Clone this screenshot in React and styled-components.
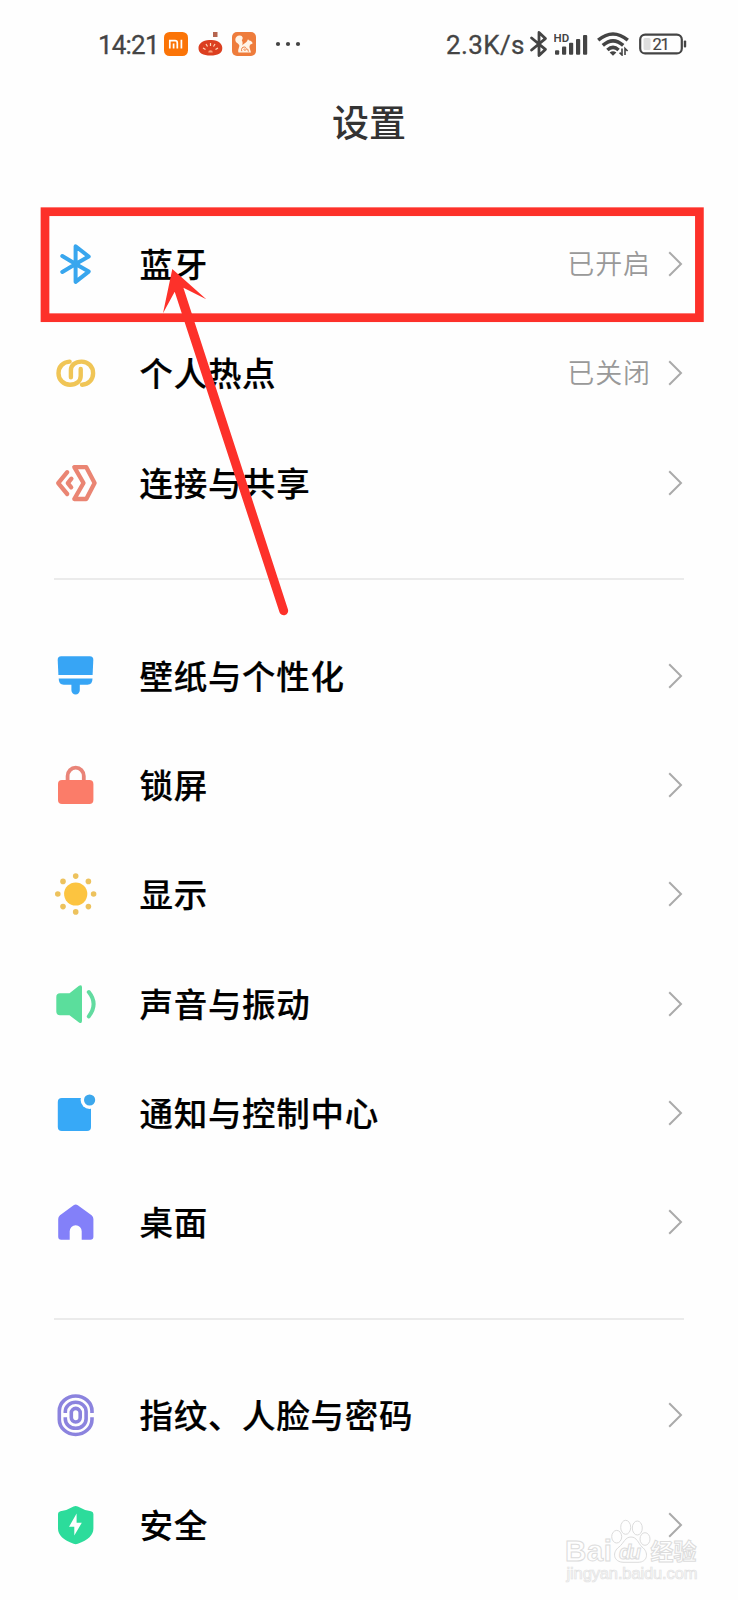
import styled, { createGlobalStyle } from "styled-components";

const GlobalStyle = createGlobalStyle`
  * {
    box-sizing: border-box;
  }
  body {
    margin: 0;
    background: #fefefe;
    font-family: "Noto Sans CJK SC", "Noto Sans", sans-serif;
  }
`;

const Page = styled.div`
  position: relative;
  width: 738px;
  height: 1600px;
  overflow: hidden;
  background: #fefefe;
`;

const StatusBar = styled.div`
  display: flex;
  justify-content: space-between;
  align-items: center;
  height: 88px;
  padding: 0 51px 0 98px;
  color: #444;
`;
const StatusGroup = styled.div`
  display: flex;
  align-items: center;
`;
const StatusText = styled.span`
  width: ${(p) => p.$width}px;
  padding-top: 1px;
  font-family: Roboto, sans-serif;
  font-size: 26px;
  line-height: 30px;
  letter-spacing: ${(p) => p.$spacing}px;
  -webkit-text-stroke: 0.3px #444;
  white-space: nowrap;
`;
const StatusIcon = styled.svg`
  flex: none;
  display: block;
  margin-left: ${(p) => p.$gap || 0}px;
`;

const Title = styled.h1`
  margin: 0;
  height: 121.33px;
  padding-top: 6px;
  text-align: center;
  font-size: 37px;
  line-height: 54px;
  font-weight: 500;
  color: #333;
`;

const Row = styled.div`
  display: flex;
  align-items: center;
  height: 109.333px;
  padding: 0 54px;
`;
const RowIcon = styled.svg`
  flex: none;
  width: 44px;
  height: 44px;
  overflow: visible;
`;
const Label = styled.div`
  flex: 1;
  margin-left: 41.5px;
  padding-bottom: 2px;
  font-size: 33.5px;
  line-height: 50px;
  font-weight: 500;
  letter-spacing: 0.7px;
  color: #000;
  -webkit-text-stroke: 0.2px #000;
`;
const Value = styled.div`
  margin-right: 17px;
  padding-bottom: 2px;
  font-size: 27px;
  line-height: 40px;
  font-weight: 350;
  letter-spacing: 0.9px;
  color: #999;
`;
const Chevron = styled.svg`
  flex: none;
  width: 16px;
  height: 28px;
`;
const Divider = styled.div`
  height: 2px;
  margin: 41px 54px 40.67px;
  background: #ebebeb;
`;

// 标注层
const Marks = styled.svg`
  position: absolute;
  left: 0;
  top: 0;
  pointer-events: none;
`;

const Watermark = styled.svg`
  position: absolute;
  left: 558px;
  top: 1514px;
`;

const icons = {
  bluetooth: (
    <path
      d="M-13.7 -8L-.4 0L12.7 7.6L-.4 17.8V-17.8L12.7 -7.5L-.4 0L-13.7 8"
      fill="none"
      stroke="#38a6ee"
      strokeWidth="4"
      strokeLinecap="round"
      strokeLinejoin="round"
    />
  ),
  hotspot: (
    <g fill="none" stroke="#f0c556" strokeWidth="4.4" strokeLinecap="round">
      <path d="M-6.4 -11.4C-13 -11 -17.5 -6.3 -17.5 .2C-17.5 6.8 -12.5 11.7 -6 11.7C.5 11.7 4.7 8.2 4.7 3V-4" />
      <path d="M6 11.7C12.6 11.3 17.1 6.6 17.1 .2C17.1 -6.5 12.1 -11.4 5.6 -11.4C-.9 -11.4 -5.1 -7.9 -5.1 -2.7V4.3" />
    </g>
  ),
  share: (
    <g
      fill="none"
      stroke="#ea8573"
      strokeWidth="4.3"
      strokeLinecap="round"
      strokeLinejoin="round"
    >
      <path d="M-1.7 -15.8H10.3L18.6 0L10.3 16H-1.7L7.5 0Z" />
      <path d="M-8.8 -10.8L-17.8 .2L-8.8 11" />
      <path d="M-4.6 -4.3L-8.2 .2L-4.8 4.3" />
    </g>
  ),
  wallpaper: (
    <g fill="#37a5f5">
      <path d="M-14.8 -19.7H13.8Q17.4 -19.7 17.3 -16L16.6 -1H-17.6L-18.3 -16Q-18.4 -19.7 -14.8 -19.7Z" />
      <path d="M-17.3 2.5H16.5Q16.5 8.7 11.5 8.7H3.8V14.2A4.2 4.2 0 0 1 -4.6 14.2V8.7H-12.3Q-17.3 8.7 -17.3 2.5Z" />
    </g>
  ),
  lock: (
    <>
      <path
        d="M-8.4 -4V-9A8.1 8.4 0 0 1 7.8 -9V-4"
        fill="none"
        stroke="#e98478"
        strokeWidth="3.8"
      />
      <rect x="-18" y="-5" width="35.4" height="24" rx="4" fill="#fb7c69" />
    </>
  ),
  display: (
    <>
      <circle cx="-.3" cy="0" r="11.6" fill="#fcc440" />
      <g fill="#edc25d">
        <circle cx="-.3" cy="-17.9" r="2.8" />
        <circle cx="12.4" cy="-12.6" r="2.8" />
        <circle cx="17.6" cy="0" r="2.8" />
        <circle cx="12.4" cy="12.6" r="2.8" />
        <circle cx="-.3" cy="17.9" r="2.8" />
        <circle cx="-13" cy="12.6" r="2.8" />
        <circle cx="-18.2" cy="0" r="2.8" />
        <circle cx="-13" cy="-12.6" r="2.8" />
      </g>
    </>
  ),
  sound: (
    <>
      <path
        d="M-16 -10.7H-6.5L3 -18.2Q6 -20 6 -16.6V16.8Q6 20.2 3 18.5L-6.5 11.3H-16Q-19.7 11.3 -19.7 7.6V-7Q-19.7 -10.7 -16 -10.7Z"
        fill="#5bde9c"
      />
      <path
        d="M12.8 -12Q22.4 0 12.8 12.4"
        fill="none"
        stroke="#62dba0"
        strokeWidth="4"
        strokeLinecap="round"
      />
    </>
  ),
  notice: (
    <>
      <rect x="-18.2" y="-15" width="33.2" height="33" rx="4" fill="#37a9f7" />
      <circle cx="13.6" cy="-13" r="9" fill="#fefefe" />
      <circle cx="13.6" cy="-13" r="5.6" fill="#3ca7ec" />
    </>
  ),
  home: (
    <path
      d="M-2.4 -16.7Q-.3 -18.2 1.8 -16.7L15.6 -6.8Q17.4 -5.4 17.4 -3V14.7Q17.4 17.7 14.4 17.7H5.7V9.3A6 6 0 0 0 -6.3 9.3V17.7H-14.8Q-17.8 17.7 -17.8 14.7V-3Q-17.8 -5.4 -16 -6.8Z"
      fill="#8380f9"
    />
  ),
  fingerprint: (
    <g fill="none" stroke="#8b83de" strokeWidth="3.6">
      <path d="M16 -2V-4A16.3 15 0 0 0 -16.7 -4V4.4A16.3 15 0 0 0 16 4.4V2.2" />
      <path d="M-10.7 -2V-3.4A10.4 9.3 0 0 1 10.1 -3.4V4A10.4 9.3 0 0 1 -10.7 4V2.2" />
      <rect x="-4.7" y="-6.6" width="8.9" height="13.6" rx="4.4" />
    </g>
  ),
  security: (
    <>
      <path
        d="M-2.4 -18.4Q-.3 -19.6 1.8 -18.4Q8 -14.6 15 -13.8Q17.4 -13.4 17.4 -11V3.5Q17.4 13.2 1.8 18.8Q-.3 19.7 -2.4 18.8Q-18 13.2 -18 3.5V-11Q-18 -13.4 -15.6 -13.8Q-8.6 -14.6 -2.4 -18.4Z"
        fill="#2cdc9b"
      />
      <path d="M.6 -11.4L-7 1.8H-1.7V10.4L5.8 -2.2H.6Z" fill="#fefefe" />
    </>
  ),
};

const groups = [
  [
    { icon: "bluetooth", label: "蓝牙", value: "已开启" },
    { icon: "hotspot", label: "个人热点", value: "已关闭" },
    { icon: "share", label: "连接与共享" },
  ],
  [
    { icon: "wallpaper", label: "壁纸与个性化" },
    { icon: "lock", label: "锁屏" },
    { icon: "display", label: "显示" },
    { icon: "sound", label: "声音与振动" },
    { icon: "notice", label: "通知与控制中心" },
    { icon: "home", label: "桌面" },
  ],
  [
    { icon: "fingerprint", label: "指纹、人脸与密码" },
    { icon: "security", label: "安全" },
  ],
];

function SettingRow({ icon, label, value }) {
  return (
    <Row>
      <RowIcon viewBox="-22 -22 44 44">{icons[icon]}</RowIcon>
      <Label>{label}</Label>
      {value && <Value>{value}</Value>}
      <Chevron viewBox="0 0 16 28">
        <path d="M1.2 2.2L13 14L1.2 25.8" fill="none" stroke="#aaa" strokeWidth="2" />
      </Chevron>
    </Row>
  );
}

function Status() {
  return (
    <StatusBar>
      <StatusGroup>
        <StatusText $width={66} $spacing={-0.8}>14:21</StatusText>
        <StatusIcon width="24" height="24" viewBox="0 0 24 24">
          <rect width="24" height="24" rx="5.5" fill="#fb7407" />
          <path
            d="M5.8 16.4V8.6H11Q13.3 8.6 13.3 10.9V16.4M9.6 11.4V16.4M17.4 7.7V16.4"
            fill="none"
            stroke="#fff"
            strokeWidth="1.7"
          />
        </StatusIcon>
        <StatusIcon $gap={9.5} width="25" height="24" viewBox="0 0 25 24">
          <rect x="15" y="0" width="4.5" height="5" fill="#b5654f" />
          <path
            d="M12.5 8C20 7.5 24.3 11.5 24.3 16C24.3 21.5 20 23.5 12.5 23.5C5 23.5 .5 21.5 .5 16C.5 11.5 5 7.5 12.5 8Z"
            fill="#dc3f20"
          />
          <path
            d="M12.5 11V14M8 12L9.5 14.5M17 12L15.5 14.5M5 16L7.5 17.5M20 16L17.5 17.5"
            stroke="#ffd9b8"
            strokeWidth="1.2"
          />
          <path d="M10.2 20.5A2.3 2.3 0 0 1 14.8 20.5Z" fill="#f9a27c" />
        </StatusIcon>
        <StatusIcon $gap={9.5} width="24" height="24" viewBox="0 0 24 24">
          <rect width="24" height="24" rx="5" fill="#ee7c3c" />
          <path
            d="M6.5 20.5C5.5 17.5 7.5 15.5 7.3 13.5C7 11.5 3.3 11 3.3 7.8C3.3 5 5.5 3.2 8 3.5C10.8 3.8 11.5 6.5 9.8 8.2C11 10 10.6 12 10.2 13.6C11.5 11.2 14.2 10.8 15 9.2L16 7.3L17.2 8.6C19 8.8 20.4 10 20.6 11.4L18 12.8L17.4 15L19 20.5Z"
            fill="#fff3e6"
          />
          <path
            d="M9.8 19.2C8.8 16.8 10.4 14.8 12.4 15C14.6 15.2 15 18 13 18.3C11.8 18.4 11.6 17 12.4 16.7M15.6 16.8L16.4 19.6"
            fill="none"
            stroke="#ee7c3c"
            strokeWidth="1"
          />
        </StatusIcon>
        <StatusIcon $gap={18.5} width="26" height="6" viewBox="0 0 26 6" fill="#444">
          <circle cx="3" cy="3" r="2.1" />
          <circle cx="13" cy="3" r="2.1" />
          <circle cx="23" cy="3" r="2.1" />
        </StatusIcon>
      </StatusGroup>
      <StatusGroup>
        <StatusText $width={84} $spacing={0.4}>2.3K/s</StatusText>
        <StatusIcon width="18" height="28" viewBox="0 0 18 28">
          <path
            d="M1.6 8L15.4 19.4L9 25.6V2.4L15.4 8.6L1.6 20"
            fill="none"
            stroke="#444"
            strokeWidth="2.8"
            strokeLinejoin="round"
            strokeLinecap="round"
          />
        </StatusIcon>
        <StatusIcon $gap={6} width="36" height="24" viewBox="0 0 36 24" fill="#444">
          <text x="-.4" y="9.6" fontFamily="Roboto" fontSize="11.5" fontWeight="600">HD</text>
          <rect x="1" y="18.2" width="4.2" height="4.6" rx="1" />
          <rect x="8" y="14.6" width="4.2" height="8.2" rx="1" />
          <rect x="15" y="10.8" width="4.2" height="12" rx="1" />
          <rect x="22" y="7" width="4.2" height="15.8" rx="1" />
          <rect x="29" y="3" width="4.2" height="19.8" rx="1" />
        </StatusIcon>
        <StatusIcon $gap={7} width="32" height="24" viewBox="0 0 32 24">
          <g fill="none" stroke="#444" strokeWidth="3.5">
            <path d="M1.2 8.2Q16 -4.3 30.8 8.2" />
            <path d="M5.8 13.4Q16 4.2 26.2 13.4" />
            <path d="M10.4 18Q16 12.8 21.6 18" />
          </g>
          <path d="M12.6 20.6Q16 17.8 19.4 20.6L16 23.8Z" fill="#444" />
          <path
            d="M25 16.4V23L22.6 20.6M28 23V16.4L30.6 19"
            fill="none"
            stroke="#444"
            strokeWidth="1.6"
          />
        </StatusIcon>
        <StatusIcon $gap={10} width="48" height="22" viewBox="0 0 48 22">
          <rect x="1.2" y="1.6" width="41.6" height="18.8" rx="5" fill="none" stroke="#444" strokeWidth="2.2" />
          <rect x="4.5" y="5" width="7" height="12" rx="1.5" fill="#ddd" />
          <rect x="44.8" y="7.5" width="2.4" height="7" rx="1" fill="#444" />
          <text x="13.5" y="17" fontFamily="Roboto" fontSize="16.5" fill="#444" stroke="#444" strokeWidth=".2" letterSpacing="-1.2">21</text>
        </StatusIcon>
      </StatusGroup>
    </StatusBar>
  );
}

function App() {
  return (
    <Page>
      <GlobalStyle />
      <Status />
      <Title>设置</Title>
      {groups.map((group, i) => (
        <div key={i}>
          {i > 0 && <Divider />}
          {group.map((item) => (
            <SettingRow key={item.icon} {...item} />
          ))}
        </div>
      ))}

      <Marks width="738" height="640" viewBox="0 0 738 640">
        <rect x="45" y="211.7" width="654.4" height="106" fill="none" stroke="#fd312a" strokeWidth="8.7" />
        <path
          d="M172.3 269L206.3 299.3L183.4 287.8L287.9 609.3A4.4 4.4 0 0 1 279.5 612.2L174.7 291.7L163 313.3Z"
          fill="#fd312a"
        />
      </Marks>

      <Watermark width="150" height="76" viewBox="0 0 150 76">
        <g fill="#fefefe" stroke="#dcdcdc" strokeWidth="1">
          <text x="7" y="47" fontFamily="Liberation Sans" fontSize="29.5" fontWeight="700" textLength="47">Bai</text>
          <ellipse cx="58.7" cy="22.7" rx="5" ry="6.3" />
          <ellipse cx="67.7" cy="13.3" rx="5" ry="7" />
          <ellipse cx="79.3" cy="14" rx="5" ry="7" />
          <ellipse cx="87" cy="25" rx="5" ry="6.3" />
          <path d="M73 23C79 23 80 29 84 33C91 38 90 48.3 80 48.3H66C55 48.3 54 38 61 33C66 29 67 23 73 23Z" />
          <text x="61" y="45" fontFamily="Liberation Sans" fontSize="20" fontWeight="700" fontStyle="italic" textLength="22">du</text>
          <text x="92.5" y="46" fontFamily="Noto Sans CJK SC" fontSize="23" fontWeight="700" textLength="46">经验</text>
        </g>
        <text x="8.5" y="65" fontFamily="Liberation Sans" fontSize="16.5" fill="#fbfbfb" stroke="#e2e2e2" strokeWidth=".7" textLength="131">jingyan.baidu.com</text>
      </Watermark>
    </Page>
  );
}

export default App;
